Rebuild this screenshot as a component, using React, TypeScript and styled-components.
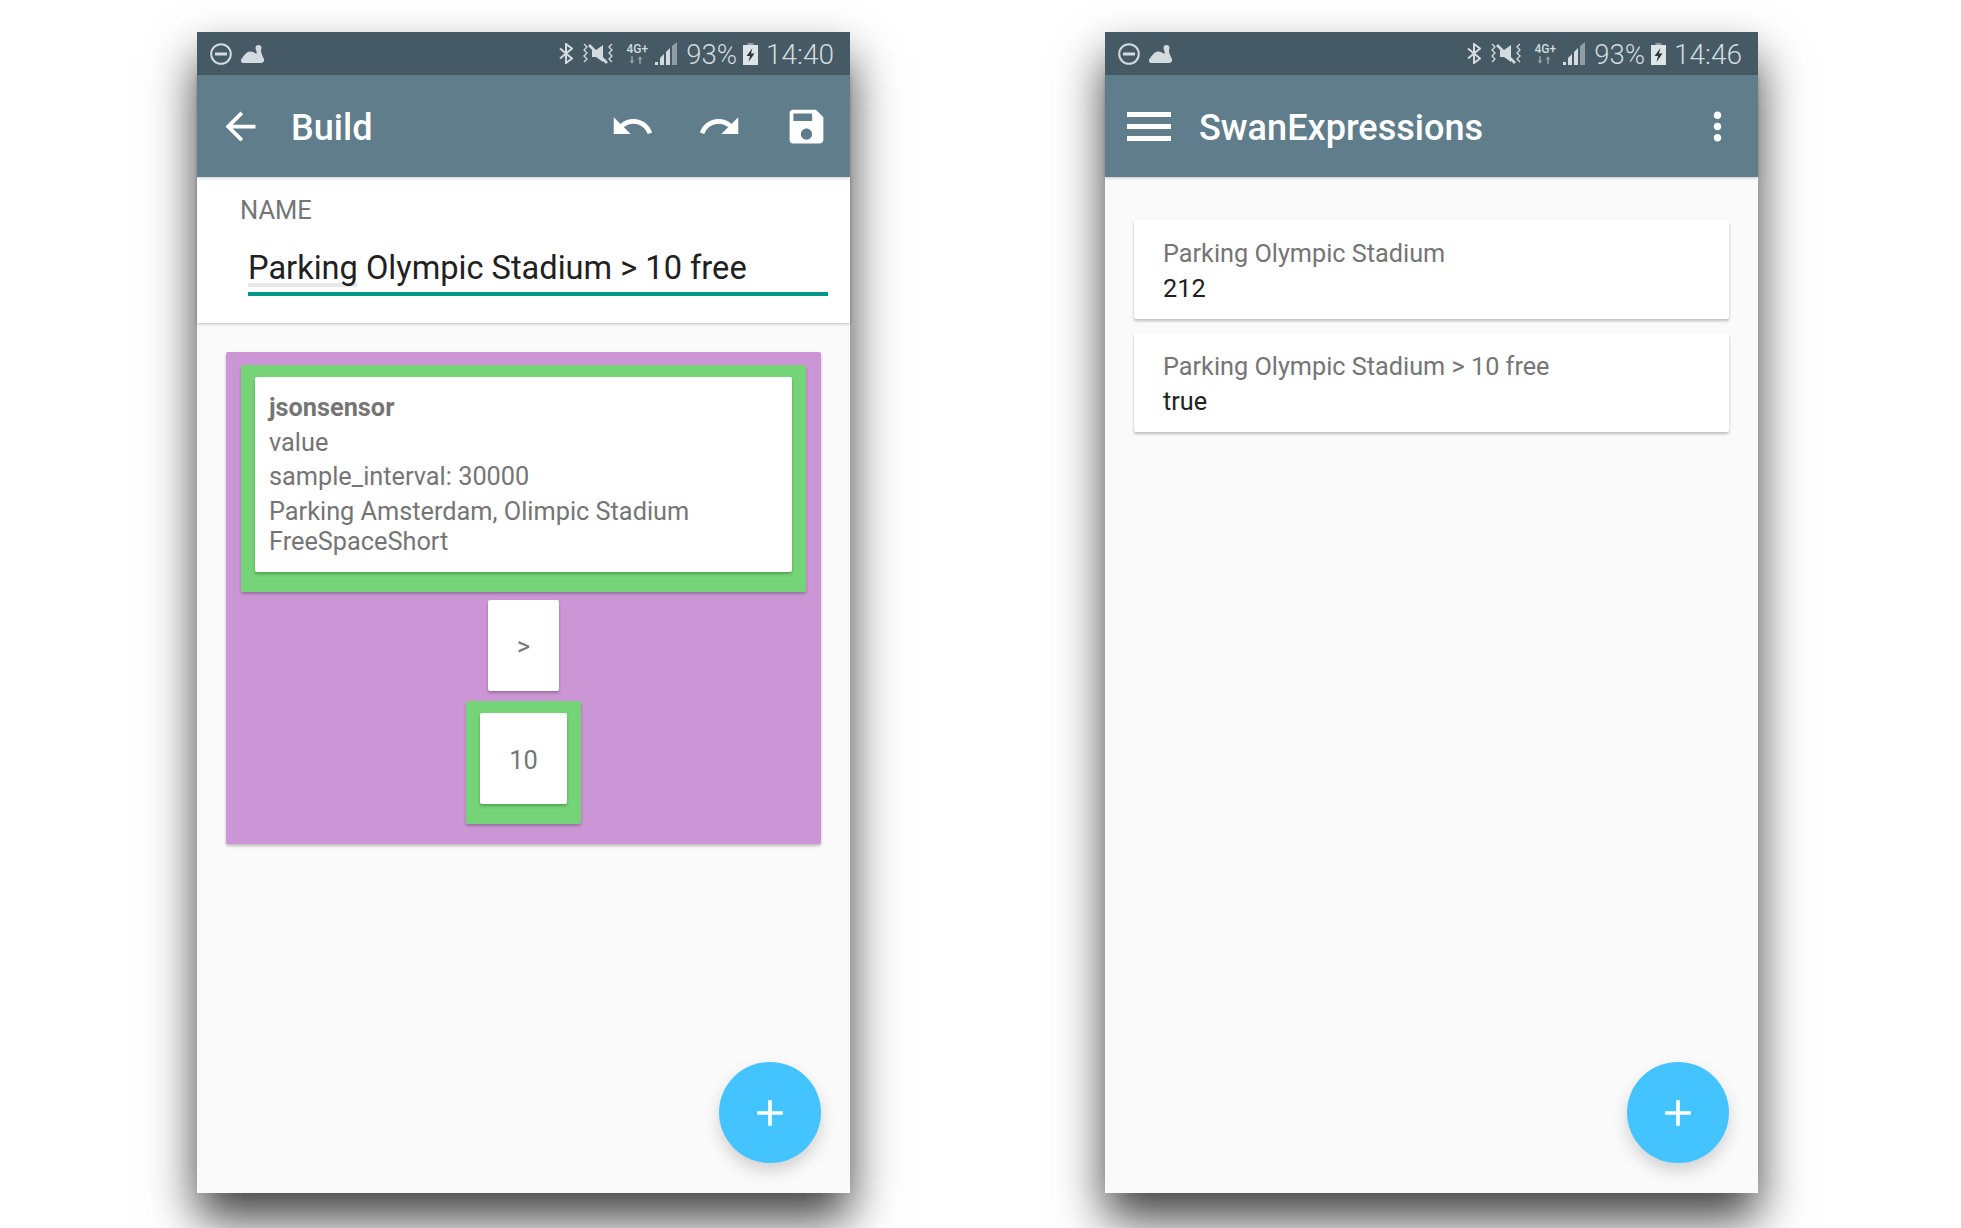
import styled, { createGlobalStyle } from 'styled-components'
import { MdArrowBack, MdUndo, MdRedo, MdSave, MdMoreVert, MdAdd } from 'react-icons/md'

const GlobalStyle = createGlobalStyle`
html, body {
    margin: 0;
    padding: 0;
    background: #ffffff;
    overflow: hidden;
}
* {
    box-sizing: border-box;
}
`

const StatusBar = ({ time }: { time: string }) => {
    return (
        <Status>
            <svg width="22" height="22" viewBox="0 0 22 22" fill="none" stroke="#d3dbde" strokeWidth="2">
                <circle cx="11" cy="11" r="9.800" />
                <path d="M5 11h12" strokeWidth="3" />
            </svg>
            <svg width="24" height="18" viewBox="0 0 24 18" fill="#d3dbde" style={{ marginLeft: 9 }}>
                <circle cx="17.500" cy="3" r="3" />
                <path d="M0 14.500C2 13 4 6.500 9.500 6.500c2.500 0 4.500 1.500 6 2.500.5-2-.5-4-.5-5.500h5c-.5 3 .5 5.500 3 10.500.5 2-.5 4-3 4H3c-2 0-3.500-1-3-3.500z" />
            </svg>
            <StatusRight>
                <svg width="14" height="21" viewBox="0 0 14 21" fill="none" stroke="#d3dbde" strokeWidth="2" style={{ marginRight: 8 }}>
                    <path d="M1 5.500l12 10L7 20V1l6 4.500-12 10" />
                </svg>
                <svg width="34" height="24" viewBox="0 0 34 24" fill="none" stroke="#d3dbde" style={{ marginRight: 11 }}>
                    <path d="M3 2l3 3-3 3 3 3-3 3 3 3-3 3" strokeWidth="1.300" />
                    <path d="M31 2l-3 3 3 3-3 3 3 3-3 3 3 3" strokeWidth="1.300" />
                    <path d="M11 8h4l7-5v17l-7-5h-4z" fill="#d3dbde" stroke="none" />
                    <path d="M8 3l18 18" strokeWidth="2.600" />
                </svg>
                <NetworkBlock>
                    <NetworkLabel>4G+</NetworkLabel>
                    <svg width="16" height="8" viewBox="0 0 16 8" fill="#8f9ea5">
                        <path d="M3 8L.5 4.500h1.700V0h1.600v4.500h1.700zM11 0l2.500 3.500h-1.700V8h-1.600V3.500H8.500z" />
                    </svg>
                </NetworkBlock>
                <svg width="24" height="23" viewBox="0 0 24 23" style={{ marginLeft: 7, marginRight: 7 }}>
                    <path d="M0 23v-3h3v3z" fill="#d3dbde" />
                    <path d="M5 23v-7l4-4v11z" fill="#d3dbde" />
                    <path d="M11 23V10l4-4v17z" fill="#d3dbde" />
                    <path d="M17 23V4l5-4v23z" fill="#8f9ea5" />
                </svg>
                <Percent>93%</Percent>
                <svg width="15" height="22" viewBox="0 0 15 22" style={{ marginLeft: 6, marginRight: 8 }}>
                    <path d="M4.500 0h6v2h-6z" fill="#8f9ea5" />
                    <path d="M0 2h15v20H0z" fill="#dfe5e7" />
                    <path d="M9.500 5L3.500 13h3.500l-1.500 6 6-8.500H8z" fill="#2b3a41" />
                </svg>
                <Clock>{time}</Clock>
            </StatusRight>
        </Status>
    )
}

const Fab = () => {
    return (
        <FabButton>
            <MdAdd size={44} color="#ffffff" />
        </FabButton>
    )
}

const App = () => {
    return (
        <Page>
            <GlobalStyle />
            <Phone>
                <StatusBar time="14:40" />
                <Toolbar>
                    <IconSlot>
                        <MdArrowBack size={45} color="#ffffff" />
                    </IconSlot>
                    <Title>Build</Title>
                    <Actions>
                        <IconSlot>
                            <MdUndo size={45} color="#ffffff" />
                        </IconSlot>
                        <IconSlot>
                            <MdRedo size={45} color="#ffffff" />
                        </IconSlot>
                        <IconSlot>
                            <MdSave size={45} color="#ffffff" />
                        </IconSlot>
                    </Actions>
                </Toolbar>
                <NameSection>
                    <NameLabel>NAME</NameLabel>
                    <NameInput>
                        <SpellMark />
                        Parking Olympic Stadium &gt; 10 free
                    </NameInput>
                </NameSection>
                <Body>
                    <Canvas>
                        <GreenBlock $wide>
                            <SensorCard>
                                <SensorName>jsonsensor</SensorName>
                                <SensorLine>value</SensorLine>
                                <SensorLine>sample_interval: 30000</SensorLine>
                                <SensorLine>Parking Amsterdam, Olimpic Stadium FreeSpaceShort</SensorLine>
                            </SensorCard>
                        </GreenBlock>
                        <Operator>&gt;</Operator>
                        <GreenBlock>
                            <Constant>10</Constant>
                        </GreenBlock>
                    </Canvas>
                    <Fab />
                </Body>
            </Phone>
            <Phone>
                <StatusBar time="14:46" />
                <Toolbar $kebab>
                    <MenuIcon width="44" height="29" viewBox="0 0 44 29" fill="#ffffff">
                        <rect width="44" height="5" />
                        <rect y="12" width="44" height="5" />
                        <rect y="24" width="44" height="5" />
                    </MenuIcon>
                    <Title>SwanExpressions</Title>
                    <Actions>
                        <IconSlot>
                            <MdMoreVert size={45} color="#ffffff" />
                        </IconSlot>
                    </Actions>
                </Toolbar>
                <Body $list>
                    <ResultCard>
                        <ResultName>Parking Olympic Stadium</ResultName>
                        <ResultValue>212</ResultValue>
                    </ResultCard>
                    <ResultCard>
                        <ResultName>Parking Olympic Stadium &gt; 10 free</ResultName>
                        <ResultValue>true</ResultValue>
                    </ResultCard>
                    <Fab />
                </Body>
            </Phone>
        </Page>
    )
}

export default App

const Page = styled.div`
width: 1961px;
height: 1228px;
overflow: hidden;
padding: 32px 0 0 197px;
display: flex;
gap: 255px;
font-family: Roboto, "Liberation Sans", sans-serif;
`

const Phone = styled.div`
width: 653px;
height: 1161px;
display: flex;
flex-direction: column;
background-color: #fafafa;
box-shadow: 0 26px 45px rgba(0, 0, 0, 0.75);
`

const Status = styled.div`
height: 43px;
flex-shrink: 0;
display: flex;
align-items: center;
padding: 0 16px 0 13px;
background-color: #455a64;
color: #d3dbde;
`

const StatusRight = styled.div`
margin-left: auto;
display: flex;
align-items: center;
`

const NetworkBlock = styled.div`
display: flex;
flex-direction: column;
align-items: center;
line-height: 1;
`

const NetworkLabel = styled.span`
font-size: 12px;
font-weight: 500;
line-height: 13px;
`

const Percent = styled.span`
font-size: 27.5px;
font-weight: 300;
padding-top: 2px;
`

const Clock = styled.span`
font-size: 28px;
font-weight: 300;
padding-top: 2px;
`

const Toolbar = styled.div<{ $kebab?: boolean }>`
height: 102px;
flex-shrink: 0;
display: flex;
align-items: center;
padding: 0 ${(p) => (p.$kebab ? '18px' : '21px')} 0 21px;
gap: 28px;
background-color: #607d8b;
position: relative;
z-index: 2;
box-shadow: 0 1px 3px rgba(0, 0, 0, 0.2);
`

const MenuIcon = styled.svg`
margin-left: 1px;
`

const Title = styled.div`
font-size: 36.1px;
font-weight: 500;
color: #ffffff;
padding-top: 3px;
`

const Actions = styled.div`
margin-left: auto;
display: flex;
align-items: center;
gap: 42px;
`

const IconSlot = styled.div`
width: 45px;
height: 45px;
display: flex;
align-items: center;
justify-content: center;
`

const NameSection = styled.div`
height: 146px;
flex-shrink: 0;
padding: 18px 22px 0 43px;
background-color: #ffffff;
box-shadow: 0 1px 3px rgba(0, 0, 0, 0.25);
position: relative;
z-index: 1;
`

const NameLabel = styled.div`
font-size: 25.5px;
line-height: 30px;
color: #757575;
`

const NameInput = styled.div`
position: relative;
margin: 18px 0 0 8px;
height: 53px;
font-size: 32.6px;
line-height: 50px;
color: #212121;
border-bottom: 4px solid #009688;
`

const SpellMark = styled.span`
position: absolute;
left: 0;
bottom: 5px;
width: 109px;
height: 4px;
background-color: #e8e8e8;
z-index: -1;
`

const Body = styled.div<{ $list?: boolean }>`
position: relative;
flex: 1;
display: flex;
flex-direction: column;
gap: 14px;
padding: ${(p) => (p.$list ? '43px 29px 0' : '29px 29px 0')};
`

const Canvas = styled.div`
height: 492px;
display: flex;
flex-direction: column;
align-items: center;
padding-top: 13px;
background-color: #cc95d6;
box-shadow: 0 2px 3px rgba(0, 0, 0, 0.25);
border-radius: 2px;
`

const GreenBlock = styled.div<{ $wide?: boolean }>`
width: ${(p) => (p.$wide ? '565px' : '115px')};
height: ${(p) => (p.$wide ? '227px' : '123px')};
padding: 12px 14px 0;
background-color: #75d477;
box-shadow: 0 2px 3px rgba(0, 0, 0, 0.25);
border-radius: 2px;
`

const SensorCard = styled.div`
height: 195px;
padding: 16px 14px 0;
background-color: #ffffff;
box-shadow: 0 2px 3px rgba(0, 0, 0, 0.25);
border-radius: 2px;
font-size: 25.3px;
line-height: 30px;
color: #757575;
`

const SensorName = styled.div`
font-weight: 700;
margin-bottom: 4.5px;
`

const SensorLine = styled.div`
margin-bottom: 4.5px;
`

const Operator = styled.div`
width: 71px;
height: 91px;
margin: 8px 0 10px;
padding-top: 2px;
display: flex;
align-items: center;
justify-content: center;
background-color: #ffffff;
box-shadow: 0 2px 3px rgba(0, 0, 0, 0.25);
border-radius: 2px;
font-size: 25px;
color: #757575;
`

const Constant = styled.div`
height: 91px;
padding-top: 2px;
display: flex;
align-items: center;
justify-content: center;
background-color: #ffffff;
box-shadow: 0 2px 3px rgba(0, 0, 0, 0.25);
border-radius: 2px;
font-size: 25.4px;
color: #757575;
`

const ResultCard = styled.div`
height: 99px;
padding: 17px 29px 0;
background-color: #ffffff;
box-shadow: 0 2px 3px rgba(0, 0, 0, 0.25);
border-radius: 2px;
font-size: 25.25px;
line-height: 34.5px;
`

const ResultName = styled.div`
color: #757575;
`

const ResultValue = styled.div`
color: #212121;
`

const FabButton = styled.div`
position: absolute;
right: 29px;
bottom: 30px;
width: 102px;
height: 101px;
display: flex;
align-items: center;
justify-content: center;
border-radius: 50%;
background-color: #44c4ff;
box-shadow: 0 8px 16px rgba(0, 0, 0, 0.16);
`
